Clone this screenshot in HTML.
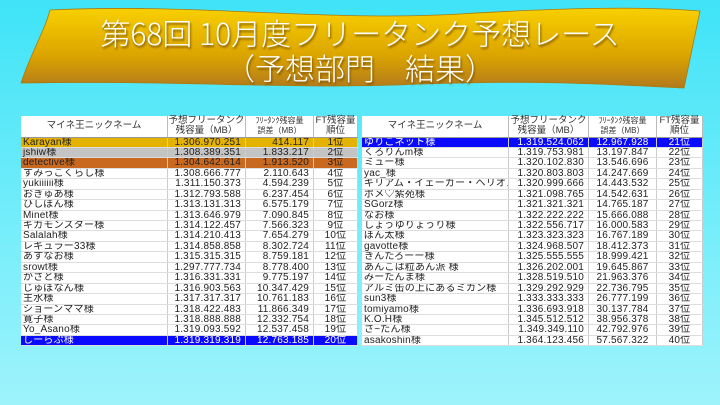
<!DOCTYPE html>
<html><head><meta charset="utf-8"><style>
*{margin:0;padding:0;box-sizing:border-box}
body{width:720px;height:405px;overflow:hidden;background:linear-gradient(#3fe3f7,#79eefb 60%,#9ef3fb);font-family:"Liberation Sans","Noto Sans CJK JP",sans-serif;position:relative}
.t{position:absolute;font-family:"Noto Sans CJK JP",sans-serif;font-weight:300;color:#fff;font-size:30px;text-align:center;width:720px;left:0;text-shadow:1px 2px 2px #7a5200}
.tb{position:absolute;top:116px;background:#fff;font-size:10px;color:#222;letter-spacing:0.2px}
.hd{display:flex;height:21.5px;border-bottom:1px solid #999}
.hd div{border-right:1px solid #bbb;text-align:center;font-size:9.5px;line-height:10px;display:flex;align-items:center;justify-content:center;color:#333;letter-spacing:0}
.r{display:flex;height:10.45px;line-height:10.45px;border-bottom:1px solid #ddd;white-space:nowrap}
.r div{border-right:1px solid #ccc;overflow:hidden;padding:0 2px}
.n{text-align:left}.v{text-align:right;padding-right:4px!important}.c{text-align:center}
.g{background:#e4b200}.s{background:#c4c4c4}.o{background:#c8691f}.b{background:#0a0aff;color:#fff}
</style></head><body>
<svg width="720" height="120" style="position:absolute;left:0;top:0">
<defs><linearGradient id="gg" x1="0" y1="0" x2="0" y2="1"><stop offset="0" stop-color="#f8d000"/><stop offset="0.6" stop-color="#dba400"/><stop offset="1" stop-color="#b27a1c"/></linearGradient></defs>
<path d="M50,10 C200,3 320,22 460,14 C560,8 640,6 700,11 L684,88 C600,84 540,80 420,84 C300,90 180,80 21,83 C30,55 45,30 50,10 Z" fill="url(#gg)" stroke="#a87a10" stroke-width="0.8"/>
</svg>
<div class="t" style="top:13px;line-height:38px">第68回 10月度フリータンク予想レース</div>
<div class="t" style="top:48px;line-height:38px">（予想部門　結果）</div>

<div class="tb" style="left:21px;width:337px">
<div class="hd"><div style="width:147px">マイネ王ニックネーム</div><div style="width:78px">予想フリータンク<br>残容量（MB）</div><div style="width:68px;font-size:8px">ﾌﾘｰﾀﾝｸ残容量<br>誤差（MB）</div><div style="width:44px">FT残容量<br>順位</div></div>
<div class="r g"><div class="n" style="width:147px">Karayan様</div><div class="v" style="width:78px">1.306.970.251</div><div class="v" style="width:68px">414.117</div><div class="c" style="width:44px">1位</div></div>
<div class="r s"><div class="n" style="width:147px">jshiw様</div><div class="v" style="width:78px">1.308.389.351</div><div class="v" style="width:68px">1.833.217</div><div class="c" style="width:44px">2位</div></div>
<div class="r o"><div class="n" style="width:147px">detective様</div><div class="v" style="width:78px">1.304.642.614</div><div class="v" style="width:68px">1.913.520</div><div class="c" style="width:44px">3位</div></div>
<div class="r"><div class="n" style="width:147px">すみっこくらし様</div><div class="v" style="width:78px">1.308.666.777</div><div class="v" style="width:68px">2.110.643</div><div class="c" style="width:44px">4位</div></div>
<div class="r"><div class="n" style="width:147px">yukiiiiii様</div><div class="v" style="width:78px">1.311.150.373</div><div class="v" style="width:68px">4.594.239</div><div class="c" style="width:44px">5位</div></div>
<div class="r"><div class="n" style="width:147px">おきゅあ様</div><div class="v" style="width:78px">1.312.793.588</div><div class="v" style="width:68px">6.237.454</div><div class="c" style="width:44px">6位</div></div>
<div class="r"><div class="n" style="width:147px">ひしぼん様</div><div class="v" style="width:78px">1.313.131.313</div><div class="v" style="width:68px">6.575.179</div><div class="c" style="width:44px">7位</div></div>
<div class="r"><div class="n" style="width:147px">Minet様</div><div class="v" style="width:78px">1.313.646.979</div><div class="v" style="width:68px">7.090.845</div><div class="c" style="width:44px">8位</div></div>
<div class="r"><div class="n" style="width:147px">ギガモンスター様</div><div class="v" style="width:78px">1.314.122.457</div><div class="v" style="width:68px">7.566.323</div><div class="c" style="width:44px">9位</div></div>
<div class="r"><div class="n" style="width:147px">Salalah様</div><div class="v" style="width:78px">1.314.210.413</div><div class="v" style="width:68px">7.654.279</div><div class="c" style="width:44px">10位</div></div>
<div class="r"><div class="n" style="width:147px">レギュラー33様</div><div class="v" style="width:78px">1.314.858.858</div><div class="v" style="width:68px">8.302.724</div><div class="c" style="width:44px">11位</div></div>
<div class="r"><div class="n" style="width:147px">あすなお様</div><div class="v" style="width:78px">1.315.315.315</div><div class="v" style="width:68px">8.759.181</div><div class="c" style="width:44px">12位</div></div>
<div class="r"><div class="n" style="width:147px">srowt様</div><div class="v" style="width:78px">1.297.777.734</div><div class="v" style="width:68px">8.778.400</div><div class="c" style="width:44px">13位</div></div>
<div class="r"><div class="n" style="width:147px">かさと様</div><div class="v" style="width:78px">1.316.331.331</div><div class="v" style="width:68px">9.775.197</div><div class="c" style="width:44px">14位</div></div>
<div class="r"><div class="n" style="width:147px">じゅぽなん様</div><div class="v" style="width:78px">1.316.903.563</div><div class="v" style="width:68px">10.347.429</div><div class="c" style="width:44px">15位</div></div>
<div class="r"><div class="n" style="width:147px">主水様</div><div class="v" style="width:78px">1.317.317.317</div><div class="v" style="width:68px">10.761.183</div><div class="c" style="width:44px">16位</div></div>
<div class="r"><div class="n" style="width:147px">ショーンママ様</div><div class="v" style="width:78px">1.318.422.483</div><div class="v" style="width:68px">11.866.349</div><div class="c" style="width:44px">17位</div></div>
<div class="r"><div class="n" style="width:147px">寛子様</div><div class="v" style="width:78px">1.318.888.888</div><div class="v" style="width:68px">12.332.754</div><div class="c" style="width:44px">18位</div></div>
<div class="r"><div class="n" style="width:147px">Yo_Asano様</div><div class="v" style="width:78px">1.319.093.592</div><div class="v" style="width:68px">12.537.458</div><div class="c" style="width:44px">19位</div></div>
<div class="r b"><div class="n" style="width:147px">しーらぷ様</div><div class="v" style="width:78px">1.319.319.319</div><div class="v" style="width:68px">12.763.185</div><div class="c" style="width:44px">20位</div></div>
</div>

<div class="tb" style="left:362px;width:341px">
<div class="hd"><div style="width:147px">マイネ王ニックネーム</div><div style="width:80px">予想フリータンク<br>残容量（MB）</div><div style="width:68px;font-size:8px">ﾌﾘｰﾀﾝｸ残容量<br>誤差（MB）</div><div style="width:46px">FT残容量<br>順位</div></div>
<div class="r b"><div class="n" style="width:147px">ゆりこネット様</div><div class="v" style="width:80px">1.319.524.062</div><div class="c" style="width:68px">12.967.928</div><div class="c" style="width:46px">21位</div></div>
<div class="r"><div class="n" style="width:147px">くろりんm様</div><div class="v" style="width:80px">1.319.753.981</div><div class="c" style="width:68px">13.197.847</div><div class="c" style="width:46px">22位</div></div>
<div class="r"><div class="n" style="width:147px">ミュー様</div><div class="v" style="width:80px">1.320.102.830</div><div class="c" style="width:68px">13.546.696</div><div class="c" style="width:46px">23位</div></div>
<div class="r"><div class="n" style="width:147px">yac_様</div><div class="v" style="width:80px">1.320.803.803</div><div class="c" style="width:68px">14.247.669</div><div class="c" style="width:46px">24位</div></div>
<div class="r"><div class="n" style="width:147px">ギリアム・イェーガー・ヘリオス様</div><div class="v" style="width:80px">1.320.999.666</div><div class="c" style="width:68px">14.443.532</div><div class="c" style="width:46px">25位</div></div>
<div class="r"><div class="n" style="width:147px">ポメ♡紫苑様</div><div class="v" style="width:80px">1.321.098.765</div><div class="c" style="width:68px">14.542.631</div><div class="c" style="width:46px">26位</div></div>
<div class="r"><div class="n" style="width:147px">SGorz様</div><div class="v" style="width:80px">1.321.321.321</div><div class="c" style="width:68px">14.765.187</div><div class="c" style="width:46px">27位</div></div>
<div class="r"><div class="n" style="width:147px">なお様</div><div class="v" style="width:80px">1.322.222.222</div><div class="c" style="width:68px">15.666.088</div><div class="c" style="width:46px">28位</div></div>
<div class="r"><div class="n" style="width:147px">しょうゆりょうり様</div><div class="v" style="width:80px">1.322.556.717</div><div class="c" style="width:68px">16.000.583</div><div class="c" style="width:46px">29位</div></div>
<div class="r"><div class="n" style="width:147px">ぽん太様</div><div class="v" style="width:80px">1.323.323.323</div><div class="c" style="width:68px">16.767.189</div><div class="c" style="width:46px">30位</div></div>
<div class="r"><div class="n" style="width:147px">gavotte様</div><div class="v" style="width:80px">1.324.968.507</div><div class="c" style="width:68px">18.412.373</div><div class="c" style="width:46px">31位</div></div>
<div class="r"><div class="n" style="width:147px">きんたろーー様</div><div class="v" style="width:80px">1.325.555.555</div><div class="c" style="width:68px">18.999.421</div><div class="c" style="width:46px">32位</div></div>
<div class="r"><div class="n" style="width:147px">あんこは粒あん派 様</div><div class="v" style="width:80px">1.326.202.001</div><div class="c" style="width:68px">19.645.867</div><div class="c" style="width:46px">33位</div></div>
<div class="r"><div class="n" style="width:147px">みーたんま様</div><div class="v" style="width:80px">1.328.519.510</div><div class="c" style="width:68px">21.963.376</div><div class="c" style="width:46px">34位</div></div>
<div class="r"><div class="n" style="width:147px">アルミ缶の上にあるミカン様</div><div class="v" style="width:80px">1.329.292.929</div><div class="c" style="width:68px">22.736.795</div><div class="c" style="width:46px">35位</div></div>
<div class="r"><div class="n" style="width:147px">sun3様</div><div class="v" style="width:80px">1.333.333.333</div><div class="c" style="width:68px">26.777.199</div><div class="c" style="width:46px">36位</div></div>
<div class="r"><div class="n" style="width:147px">tomiyamo様</div><div class="v" style="width:80px">1.336.693.918</div><div class="c" style="width:68px">30.137.784</div><div class="c" style="width:46px">37位</div></div>
<div class="r"><div class="n" style="width:147px">K.O.H様</div><div class="v" style="width:80px">1.345.512.512</div><div class="c" style="width:68px">38.956.378</div><div class="c" style="width:46px">38位</div></div>
<div class="r"><div class="n" style="width:147px">さ~たん様</div><div class="v" style="width:80px">1.349.349.110</div><div class="c" style="width:68px">42.792.976</div><div class="c" style="width:46px">39位</div></div>
<div class="r"><div class="n" style="width:147px">asakoshin様</div><div class="v" style="width:80px">1.364.123.456</div><div class="c" style="width:68px">57.567.322</div><div class="c" style="width:46px">40位</div></div>
</div>
</body></html>
